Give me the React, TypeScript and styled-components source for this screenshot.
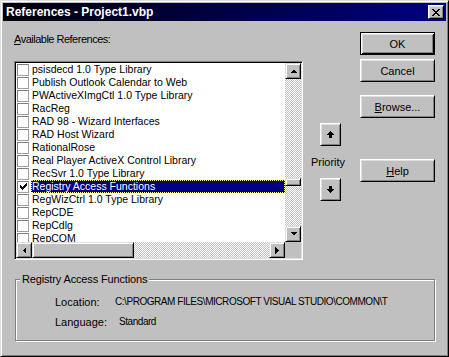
import * as React from "react"
import styled, { createGlobalStyle, css } from "styled-components"

const GlobalStyle = createGlobalStyle`
  *, *::before, *::after { box-sizing: border-box; }
  html, body { margin: 0; padding: 0; background: #c0c0c0; }
  body {
    font-family: "Liberation Sans", Arial, sans-serif;
    font-size: 11px;
    color: #000;
  }
`

const raised = css`
  border: 1px solid;
  border-color: #fff #000 #000 #fff;
  box-shadow: inset 1px 1px #dfdfdf, inset -1px -1px #808080;
`

const raisedSmall = css`
  border: 1px solid;
  border-color: #dfdfdf #000 #000 #dfdfdf;
  box-shadow: inset 1px 1px #fff, inset -1px -1px #808080;
`

const checker = css`
  background: repeating-conic-gradient(#c0c0c0 0% 25%, #fff 0% 50%) 0 0 / 2px 2px;
`

const Window = styled.div`
  width: 449px;
  height: 357px;
  padding: 2px;
  background: #c0c0c0;
  border: 1px solid;
  border-color: #dfdfdf #000 #000 #dfdfdf;
  box-shadow: inset 1px 1px #fff, inset -1px -1px #808080;
  display: flex;
  flex-direction: column;
`

const TitleBar = styled.div`
  height: 18px;
  display: flex;
  align-items: center;
  justify-content: space-between;
  padding: 0 2px 0 3px;
  background: linear-gradient(to right, #000008, #000080);
`

const TitleText = styled.span`
  color: #fff;
  font-weight: bold;
  font-size: 12px;
  line-height: 18px;
`

const CloseButton = styled.div`
  width: 16px;
  height: 14px;
  background: #c0c0c0;
  display: flex;
  align-items: center;
  justify-content: center;
  ${raised}
`

const Body = styled.div`
  flex: 1;
  padding: 11px 11px 0 11px;
  display: flex;
  flex-direction: column;
`

const TopSection = styled.div`
  height: 228px;
  display: flex;
`

const LeftColumn = styled.div`
  width: 289px;
  display: flex;
  flex-direction: column;
`

const FieldLabel = styled.div`
  height: 29px;
  padding-top: 1px;
  line-height: 13px;
  letter-spacing: -0.5px;
`

const Key = styled.span`
  text-decoration: underline;
`

const ListBox = styled.div`
  height: 199px;
  background: #fff;
  border: 1px solid;
  border-color: #808080 #fff #fff #808080;
  box-shadow: inset 1px 1px #000, inset -1px -1px #dfdfdf;
  padding: 1px;
  display: grid;
  grid-template-columns: 1fr 16px;
  grid-template-rows: 1fr 16px;
`

const ItemsArea = styled.div`
  overflow: hidden;
  display: flex;
  flex-direction: column;
`

const ItemRow = styled.div`
  height: 13px;
  flex: none;
  display: flex;
  align-items: center;
  padding-left: 1px;
`

const CheckBox = styled.span`
  width: 12px;
  height: 12px;
  flex: none;
  border: 1px solid #808080;
  border-right-color: #a0a0a0;
  border-bottom-color: #a0a0a0;
  background: #fff;
  margin-right: 2px;
  display: flex;
  align-items: center;
  justify-content: center;
`

const ItemText = styled.span<{ $selected?: boolean }>`
  flex: 1;
  height: 13px;
  line-height: 13px;
  padding-left: 1px;
  white-space: nowrap;
  font-size: 10.5px;
  ${p =>
    p.$selected &&
    css`
      background: #000080;
      color: #fff;
      outline: 1px dotted #ffff80;
      outline-offset: -1px;
    `}
`

const VScroll = styled.div`
  display: flex;
  flex-direction: column;
`

const HScroll = styled.div`
  display: flex;
`

const ScrollButton = styled.div`
  width: 16px;
  height: 16px;
  flex: none;
  background: #c0c0c0;
  display: flex;
  align-items: center;
  justify-content: center;
  ${raisedSmall}
`

const VTrack = styled.div<{ $offset: number }>`
  flex: 1;
  padding-top: ${p => p.$offset}px;
  ${checker}
`

const HTrack = styled.div<{ $offset: number }>`
  flex: 1;
  display: flex;
  padding-left: ${p => p.$offset}px;
  ${checker}
`

const Thumb = styled.div<{ $w: number; $h: number }>`
  width: ${p => p.$w}px;
  height: ${p => p.$h}px;
  background: #c0c0c0;
  ${raisedSmall}
`

const Corner = styled.div`
  background: #c0c0c0;
`

const PriorityColumn = styled.div`
  width: 57px;
  padding: 91px 2px 0 0;
  display: flex;
  flex-direction: column;
  align-items: center;
`

const ArrowButton = styled.div`
  width: 21px;
  height: 23px;
  background: #c0c0c0;
  display: flex;
  align-items: center;
  justify-content: center;
  ${raised}
`

const PriorityLabel = styled.div`
  height: 32px;
  line-height: 32px;
  margin-right: 5px;
`

const ButtonColumn = styled.div`
  width: 75px;
  display: flex;
  flex-direction: column;
`

const PushButton = styled.div<{ $gap?: number; $isDefault?: boolean }>`
  height: 23px;
  margin-top: ${p => p.$gap ?? 0}px;
  display: flex;
  align-items: center;
  justify-content: center;
  background: #c0c0c0;
  ${p =>
    p.$isDefault
      ? css`
          border: 1px solid #000;
          box-shadow: inset 1px 1px #fff, inset -1px -1px #000, inset 2px 2px #dfdfdf,
            inset -2px -2px #808080;
        `
      : raised}
`

const GroupBox = styled.div`
  position: relative;
  margin: 19px 0 0 1px;
  height: 62px;
  border: 1px solid #808080;
  box-shadow: inset 1px 1px #fff, 1px 1px #fff;
  padding: 12px 0 0 39px;
`

const GroupLabel = styled.span`
  position: absolute;
  top: -7px;
  left: 4px;
  padding: 0 2px;
  line-height: 13px;
  letter-spacing: -0.15px;
  background: #c0c0c0;
`

const InfoRow = styled.div`
  height: 20px;
  line-height: 20px;
  display: flex;
  white-space: nowrap;
`

const InfoLabel = styled.span`
  width: 60px;
  flex: none;
`

const InfoValue = styled.span<{ $shift?: number }>`
  margin-left: ${p => p.$shift ?? 0}px;
  font-size: 10px;
  letter-spacing: -0.45px;
`

const Arrow: React.FC<{ dir: "up" | "down" | "left" | "right" }> = ({ dir }) => {
  const pts = {
    up: "0,4 7,4 3.5,0.5",
    down: "0,0 7,0 3.5,3.5",
    left: "4,0 4,7 0.5,3.5",
    right: "0,0 0,7 3.5,3.5",
  }[dir]
  const vertical = dir === "up" || dir === "down"
  return (
    <svg width={vertical ? 7 : 4} height={vertical ? 4 : 7} shapeRendering="crispEdges">
      <polygon points={pts} fill="#000" />
    </svg>
  )
}

const BigArrow: React.FC<{ down?: boolean }> = ({ down }) => (
  <svg
    width="7"
    height="7"
    shapeRendering="crispEdges"
    style={{ transform: down ? "scaleY(-1)" : undefined }}
  >
    <rect x="3" y="0" width="1" height="1" />
    <rect x="2" y="1" width="3" height="1" />
    <rect x="1" y="2" width="5" height="1" />
    <rect x="0" y="3" width="7" height="1" />
    <rect x="2" y="4" width="3" height="3" />
  </svg>
)

const CloseGlyph = () => (
  <svg width="8" height="7" shapeRendering="crispEdges">
    <path d="M0 0h2v1h-2zM6 0h2v1h-2zM1 1h2v1h-2zM5 1h2v1h-2zM2 2h4v1h-4zM3 3h2v1h-2zM2 4h4v1h-4zM1 5h2v1h-2zM5 5h2v1h-2zM0 6h2v1h-2zM6 6h2v1h-2z" />
  </svg>
)

const CheckGlyph = () => (
  <svg width="7" height="7" shapeRendering="crispEdges">
    <path d="M6 0h1v3h-1zM5 1h1v3h-1zM4 2h1v3h-1zM3 3h1v3h-1zM2 4h1v3h-1zM1 3h1v3h-1zM0 2h1v3h-1z" />
  </svg>
)

const items = [
  "psisdecd 1.0 Type Library",
  "Publish Outlook Calendar to Web",
  "PWActiveXImgCtl 1.0 Type Library",
  "RacReg",
  "RAD 98 - Wizard Interfaces",
  "RAD Host Wizard",
  "RationalRose",
  "Real Player ActiveX Control Library",
  "RecSvr 1.0 Type Library",
  "Registry Access Functions",
  "RegWizCtrl 1.0 Type Library",
  "RepCDE",
  "RepCdlg",
  "RepCOM",
]

const selected = 9

const App: React.FC = () => {
  return (
    <Window>
      <GlobalStyle />
      <TitleBar>
        <TitleText>References - Project1.vbp</TitleText>
        <CloseButton>
          <CloseGlyph />
        </CloseButton>
      </TitleBar>
      <Body>
        <TopSection>
          <LeftColumn>
            <FieldLabel>
              <Key>A</Key>vailable References:
            </FieldLabel>
            <ListBox>
              <ItemsArea>
                {items.map((name, i) => (
                  <ItemRow key={name}>
                    <CheckBox>{i === selected && <CheckGlyph />}</CheckBox>
                    <ItemText $selected={i === selected}>{name}</ItemText>
                  </ItemRow>
                ))}
              </ItemsArea>
              <VScroll>
                <ScrollButton>
                  <Arrow dir="up" />
                </ScrollButton>
                <VTrack $offset={99}>
                  <Thumb $w={16} $h={8} />
                </VTrack>
                <ScrollButton>
                  <Arrow dir="down" />
                </ScrollButton>
              </VScroll>
              <HScroll>
                <ScrollButton>
                  <Arrow dir="left" />
                </ScrollButton>
                <HTrack $offset={0}>
                  <Thumb $w={102} $h={16} />
                </HTrack>
                <ScrollButton>
                  <Arrow dir="right" />
                </ScrollButton>
              </HScroll>
              <Corner />
            </ListBox>
          </LeftColumn>
          <PriorityColumn>
            <ArrowButton>
              <BigArrow />
            </ArrowButton>
            <PriorityLabel>Priority</PriorityLabel>
            <ArrowButton>
              <BigArrow down />
            </ArrowButton>
          </PriorityColumn>
          <ButtonColumn>
            <PushButton $isDefault>OK</PushButton>
            <PushButton $gap={4}>Cancel</PushButton>
            <PushButton $gap={13}>
              <span>
                <Key>B</Key>rowse...
              </span>
            </PushButton>
            <PushButton $gap={41}>
              <span>
                <Key>H</Key>elp
              </span>
            </PushButton>
          </ButtonColumn>
        </TopSection>
        <GroupBox>
          <GroupLabel>Registry Access Functions</GroupLabel>
          <InfoRow>
            <InfoLabel>Location:</InfoLabel>
            <InfoValue>C:\PROGRAM FILES\MICROSOFT VISUAL STUDIO\COMMON\T</InfoValue>
          </InfoRow>
          <InfoRow>
            <InfoLabel>Language:</InfoLabel>
            <InfoValue $shift={4}>Standard</InfoValue>
          </InfoRow>
        </GroupBox>
      </Body>
    </Window>
  )
}

export default App
